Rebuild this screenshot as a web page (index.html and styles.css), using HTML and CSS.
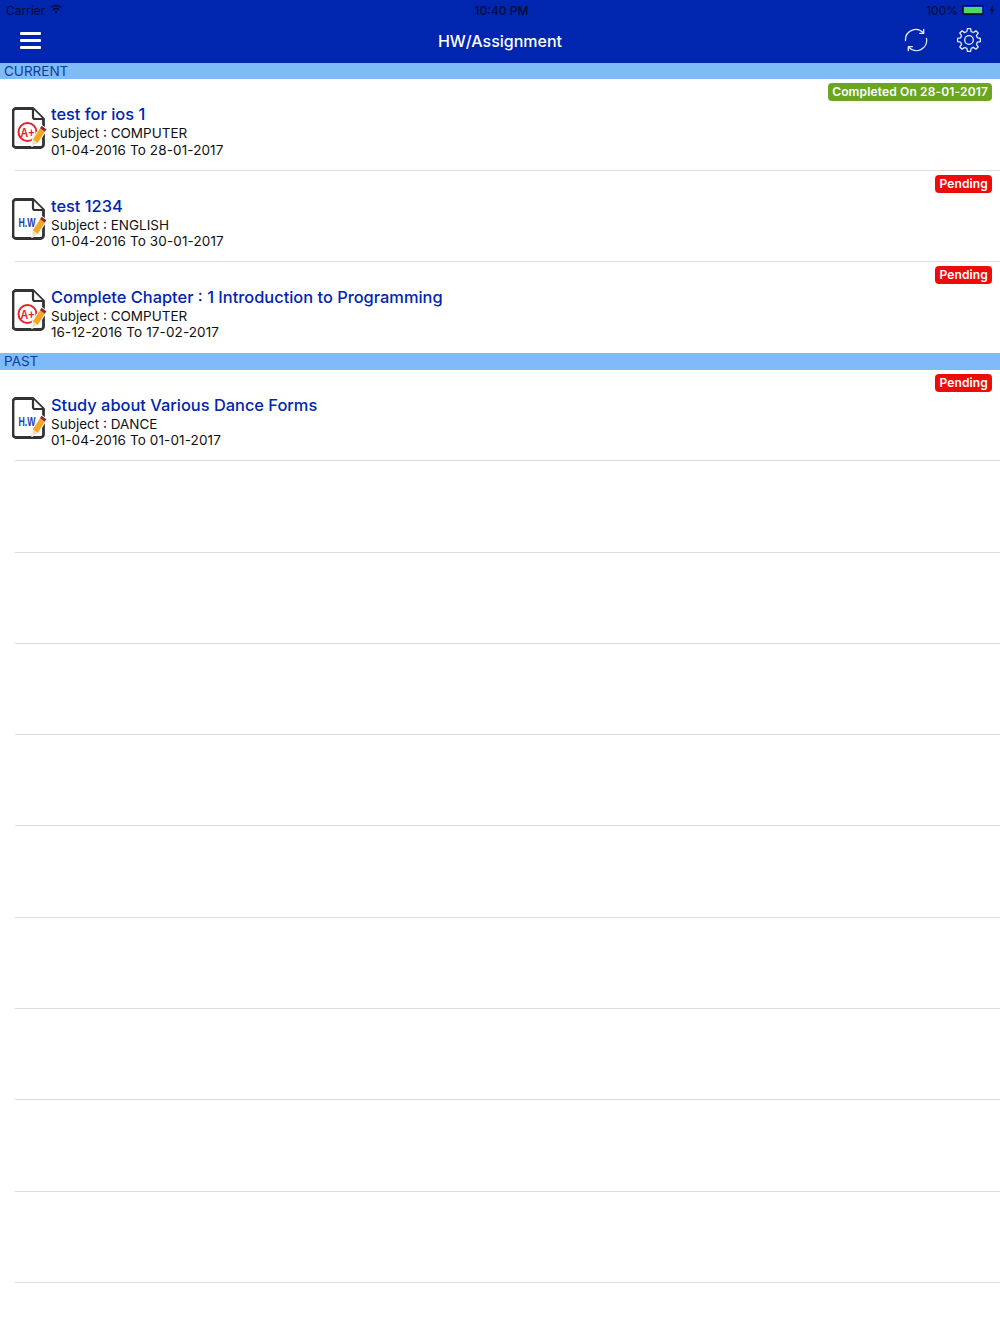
FILE: index.html
```html
<!DOCTYPE html>
<html lang="en">
<head>
<meta charset="utf-8">
<title>HW/Assignment</title>
<link rel="stylesheet" href="styles.css">
</head>
<body>
<svg class="defs" width="0" height="0" aria-hidden="true">
  <defs>
    <g id="doc">
      <path d="M4 1.500H21L31.500 12V37.500a3 3 0 0 1-3 3H4a3 3 0 0 1-3-3V4.500a3 3 0 0 1 3-3Z" fill="#fff" stroke="#333" stroke-width="2.800" stroke-linejoin="round"/>
      <path d="M21 2V10a2 2 0 0 0 2 2H31" fill="#fff" stroke="#333" stroke-width="2.200"/>
    </g>
    <g id="pencil">
      <path d="M20.500 38.500L20.800 32.600L29.600 18.800L34.400 22.200L25.600 36Z" fill="#fff" stroke="#fff" stroke-width="2"/>
      <path d="M20.800 32.600L28 21.300L32.800 24.700L25.600 36Z" fill="#f5a623"/>
      <path d="M28 21.300L29.600 18.800L34.400 22.200L32.800 24.700Z" fill="#8e2a2a"/>
      <path d="M20.500 38.500L20.800 32.600L25.600 36Z" fill="#f3dcb5"/>
    </g>
    <path id="tooth" d="M9.920 3.660L10.400 .610H13.600L14.080 3.660A8.600 8.600 0 0 1 16.430 4.630"/>
  </defs>
</svg>
<div class="screen">
  <header class="topbar">
    <div class="status">
      <div class="status-left">
        <span>Carrier</span>
        <svg class="wifi" viewBox="0 0 14 10"><path d="M7 9.800L9 7.300a3 3 0 0 0-4 0ZM3.800 5.900a5 5 0 0 1 6.400 0l1-1.300a6.700 6.700 0 0 0-8.400 0ZM1.500 3.200a8.300 8.300 0 0 1 11 0l1-1.200a10 10 0 0 0-13 0Z" fill="#050c33"/></svg>
      </div>
      <span class="clock">10:40 PM</span>
      <div class="status-right">
        <span>100%</span>
        <span class="battery"><span class="battery-fill"></span></span>
        <svg class="bolt" viewBox="0 0 6 10"><path d="M3.800 0L0.500 5.600H2.600L2 10L5.500 4.200H3.300Z" fill="#050c33"/></svg>
      </div>
    </div>
    <nav class="navbar">
      <div class="menu"><span></span><span></span><span></span></div>
      <h1 class="nav-title">HW/Assignment</h1>
      <div class="nav-actions">
        <svg class="nav-icon" viewBox="0 0 24 24" fill="none" stroke="#e6ebfb" stroke-width="1.300" stroke-linecap="round" stroke-linejoin="round">
          <path d="M1.500 12.500A10.300 10.300 0 0 1 19.300 4.800"/>
          <path d="M19.700 1.300V5.300H15.700"/>
          <path d="M22.500 10.500A10.300 10.300 0 0 1 4.700 19.200"/>
          <path d="M4.300 22.700V18.700H8.300"/>
        </svg>
        <svg class="nav-icon" viewBox="0 0 24 24" fill="none" stroke="#e6ebfb" stroke-width="1.300" stroke-linejoin="round">
          <circle cx="12" cy="12" r="4.300"/>
          <use href="#tooth"/>
          <use href="#tooth" transform="rotate(45 12 12)"/>
          <use href="#tooth" transform="rotate(90 12 12)"/>
          <use href="#tooth" transform="rotate(135 12 12)"/>
          <use href="#tooth" transform="rotate(180 12 12)"/>
          <use href="#tooth" transform="rotate(225 12 12)"/>
          <use href="#tooth" transform="rotate(270 12 12)"/>
          <use href="#tooth" transform="rotate(315 12 12)"/>
        </svg>
      </div>
    </nav>
  </header>

  <div class="section section-first">CURRENT</div>
  <article class="row">
    <svg class="doc-icon" viewBox="0 0 40 42">
      <use href="#doc"/>
      <circle cx="15.500" cy="25" r="9" fill="none" stroke="#e8202a" stroke-width="2"/>
      <text x="15.500" y="29.500" class="grade" textLength="14" lengthAdjust="spacingAndGlyphs">A+</text>
      <use href="#pencil"/>
    </svg>
    <div class="row-text">
      <h2 class="row-title">test for ios 1</h2>
      <p class="row-line">Subject : COMPUTER</p>
      <p class="row-line row-date">01-04-2016 To 28-01-2017</p>
    </div>
    <span class="badge badge-done">Completed On 28-01-2017</span>
  </article>
  <article class="row">
    <svg class="doc-icon" viewBox="0 0 40 42">
      <use href="#doc"/>
      <text x="15" y="28.500" class="hw" textLength="17" lengthAdjust="spacingAndGlyphs">H.W</text>
      <use href="#pencil"/>
    </svg>
    <div class="row-text">
      <h2 class="row-title">test 1234</h2>
      <p class="row-line">Subject : ENGLISH</p>
      <p class="row-line row-date">01-04-2016 To 30-01-2017</p>
    </div>
    <span class="badge badge-pending">Pending</span>
  </article>
  <article class="row row-last">
    <svg class="doc-icon" viewBox="0 0 40 42">
      <use href="#doc"/>
      <circle cx="15.500" cy="25" r="9" fill="none" stroke="#e8202a" stroke-width="2"/>
      <text x="15.500" y="29.500" class="grade" textLength="14" lengthAdjust="spacingAndGlyphs">A+</text>
      <use href="#pencil"/>
    </svg>
    <div class="row-text">
      <h2 class="row-title">Complete Chapter : 1 Introduction to Programming</h2>
      <p class="row-line">Subject : COMPUTER</p>
      <p class="row-line row-date">16-12-2016 To 17-02-2017</p>
    </div>
    <span class="badge badge-pending">Pending</span>
  </article>

  <div class="section">PAST</div>
  <article class="row">
    <svg class="doc-icon" viewBox="0 0 40 42">
      <use href="#doc"/>
      <text x="15" y="28.500" class="hw" textLength="17" lengthAdjust="spacingAndGlyphs">H.W</text>
      <use href="#pencil"/>
    </svg>
    <div class="row-text">
      <h2 class="row-title">Study about Various Dance Forms</h2>
      <p class="row-line">Subject : DANCE</p>
      <p class="row-line row-date">01-04-2016 To 01-01-2017</p>
    </div>
    <span class="badge badge-pending">Pending</span>
  </article>

  <div class="empty"></div>
  <div class="empty"></div>
  <div class="empty"></div>
  <div class="empty"></div>
  <div class="empty"></div>
  <div class="empty"></div>
  <div class="empty"></div>
  <div class="empty"></div>
  <div class="empty"></div>
</div>
</body>
</html>
```
FILE: styles.css
```css
* { box-sizing: border-box; }
html, body { margin: 0; padding: 0; background: #fff; }
body { font-family: Inter, "Liberation Sans", sans-serif; color: #111; }
.defs { position: absolute; }
.screen { width: 1000px; height: 1334px; overflow: hidden; }

.topbar { height: 63px; background: #0026b0; display: flex; flex-direction: column; }
.status { height: 20px; display: flex; align-items: center; justify-content: space-between; position: relative; padding: 0 5px 0 6px; font-size: 12px; color: #050c33; }
.status-left, .status-right { display: flex; align-items: center; gap: 5px; }
.wifi { width: 12px; height: 9px; margin-top: -2px; }
.clock { position: absolute; left: 0; right: 0; text-align: center; padding-left: 3px; font-weight: 500; pointer-events: none; }
.status-right { gap: 4px; }
.battery { width: 22px; height: 10px; border: 1px solid #050c33; border-radius: 2px; padding: 1px; display: flex; }
.battery-fill { flex: 1; background: #4cd964; }
.bolt { width: 6px; height: 10px; margin-left: 1px; }

.navbar { flex: 1; display: flex; align-items: center; justify-content: space-between; position: relative; padding: 0 19px 3px 20px; }
.menu { width: 21px; display: flex; flex-direction: column; gap: 4px; margin-top: 1px; }
.menu span { height: 3px; background: #fff; border-radius: 1px; }
.nav-title { position: absolute; left: 0; right: 0; margin: 0; top: 9px; text-align: center; font-size: 16px; line-height: 24px; font-weight: 500; color: #fff; }
.nav-actions { display: flex; align-items: center; gap: 29px; }
.nav-icon { width: 24px; height: 24px; display: block; }

.section { height: 17px; background: #7fbbf6; color: #0f3a9e; font-size: 13.500px; line-height: 17px; padding-left: 4px; }
.section-first { height: 16.400px; line-height: 16px; }

.row { position: relative; height: 91.300px; border-bottom: 1px solid #dcdcdc; margin-left: 15px; padding: 25px 0 0 36px; }
.row-last { border-bottom: 0; height: 91px; }
.doc-icon { position: absolute; left: -3.500px; top: 27.500px; width: 40px; height: 42px; }
.row-text { display: flex; flex-direction: column; }
.row-title { margin: 0; font-size: 16.400px; line-height: 21px; font-weight: 500; color: #0026b0; }
.row-line { margin: 0; font-size: 13.500px; line-height: 16.500px; color: #111; }
.row-date { letter-spacing: 0.120px; }
.badge { position: absolute; top: 4px; right: 8px; height: 18px; padding: 0 4px; border-radius: 4px; color: #fff; font-size: 12px; line-height: 18px; font-weight: 600; letter-spacing: 0.150px; }
.badge-done { background: #6aa61f; }
.badge-pending { background: #f00b0b; }

.grade { font-family: "Liberation Sans", sans-serif; font-size: 12.500px; font-weight: 700; fill: #e8202a; text-anchor: middle; }
.hw { font-family: "Liberation Sans", sans-serif; font-size: 13px; font-weight: 700; fill: #1a3fb5; text-anchor: middle; }

.empty { height: 91.300px; margin-left: 15px; border-bottom: 1px solid #dcdcdc; }
```
